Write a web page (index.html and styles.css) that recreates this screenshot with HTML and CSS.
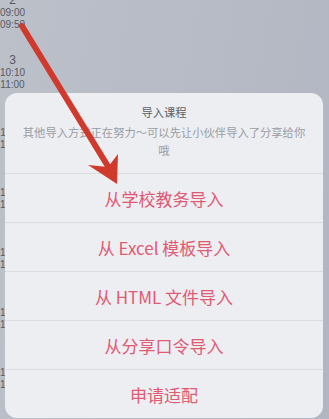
FILE: index.html
```html
<!DOCTYPE html>
<html lang="zh-CN">
<head>
  <meta charset="UTF-8" />
  <meta name="viewport" content="width=device-width, initial-scale=1.0"/>
  <title>导入课程</title>
  <link rel="stylesheet" href="styles.css">
</head>
<body>

  <!-- schedule behind the sheet -->
  <div class="times">
    <div class="slot"><div class="num">2</div><div class="t">09:00</div><div class="t">09:50</div></div>
    <div class="slot"><div class="num">3</div><div class="t">10:10</div><div class="t">11:00</div></div>
    <div class="slot"><div class="num">4</div><div class="t">11:10</div><div class="t">12:00</div></div>
    <div class="slot"><div class="num">5</div><div class="t">14:00</div><div class="t">14:50</div></div>
    <div class="slot"><div class="num">6</div><div class="t">15:00</div><div class="t">15:50</div></div>
    <div class="slot"><div class="num">7</div><div class="t">16:00</div><div class="t">16:50</div></div>
    <div class="slot"><div class="num">8</div><div class="t">17:00</div><div class="t">17:50</div></div>
  </div>

  <div class="sheet">
    <div class="sheet-head">
      <div class="sheet-title">导入课程</div>
      <div class="sheet-sub">其他导入方式正在努力～可以先让小伙伴导入了分享给你哦</div>
    </div>
    <a class="option" href="#">从学校教务导入</a>
    <a class="option" href="#">从 Excel 模板导入</a>
    <a class="option" href="#">从 HTML 文件导入</a>
    <a class="option" href="#">从分享口令导入</a>
    <a class="option" href="#">申请适配</a>
  </div>

  <!-- hand drawn arrow on top -->
  <svg class="arrow" width="329" height="419" viewBox="0 0 329 419">
    <line x1="22" y1="26" x2="109" y2="168" stroke="#d03a2c" stroke-width="6" stroke-linecap="round"/>
    <path d="M88 165 L117 184 L118 154 L108 167 Z" fill="#d03a2c"/>
  </svg>

</body>
</html>
```

FILE: styles.css
```css
* {
  margin: 0;
  padding: 0;
  box-sizing: border-box;
}

html, body {
  height: 100%;
}

body {
  width: 329px;
  height: 419px;
  position: relative;
  overflow: hidden;
  background: linear-gradient(100deg, #bcc0c9 0%, #b5bac5 60%, #b1b6c2 100%);
  font-family: "Liberation Sans", "Noto Sans CJK SC", sans-serif;
}

.times {
  width: 25px;
  margin-top: -6px;
  display: flex;
  flex-direction: column;
  color: #565a62;
  text-align: center;
}

.slot {
  height: 60px;
}

.num {
  font-size: 12px;
  line-height: 13px;
}

.t {
  font-size: 10px;
  line-height: 12px;
}

.sheet {
  position: absolute;
  left: 5px;
  right: 6px;
  top: 93px;
  height: 325px;
  background-color: #eceef2;
  border-radius: 12px;
  overflow: hidden;
  display: flex;
  flex-direction: column;
  font-family: "Noto Sans CJK SC", "Liberation Sans", sans-serif;
}

.sheet-head {
  height: 80px;
  padding: 11px 16px 0;
  text-align: center;
}

.sheet-title {
  font-size: 11.3px;
  line-height: 16px;
  color: #5c5f65;
}

.sheet-sub {
  margin-top: 3px;
  font-size: 11.3px;
  line-height: 18px;
  color: #9b9da3;
}

.option {
  height: 49px;
  border-top: 1px solid #d9dce1;
  display: flex;
  align-items: center;
  justify-content: center;
  color: #df5a72;
  font-size: 17px;
  text-decoration: none;
}

.arrow {
  position: absolute;
  left: 0;
  top: 0;
}
```
